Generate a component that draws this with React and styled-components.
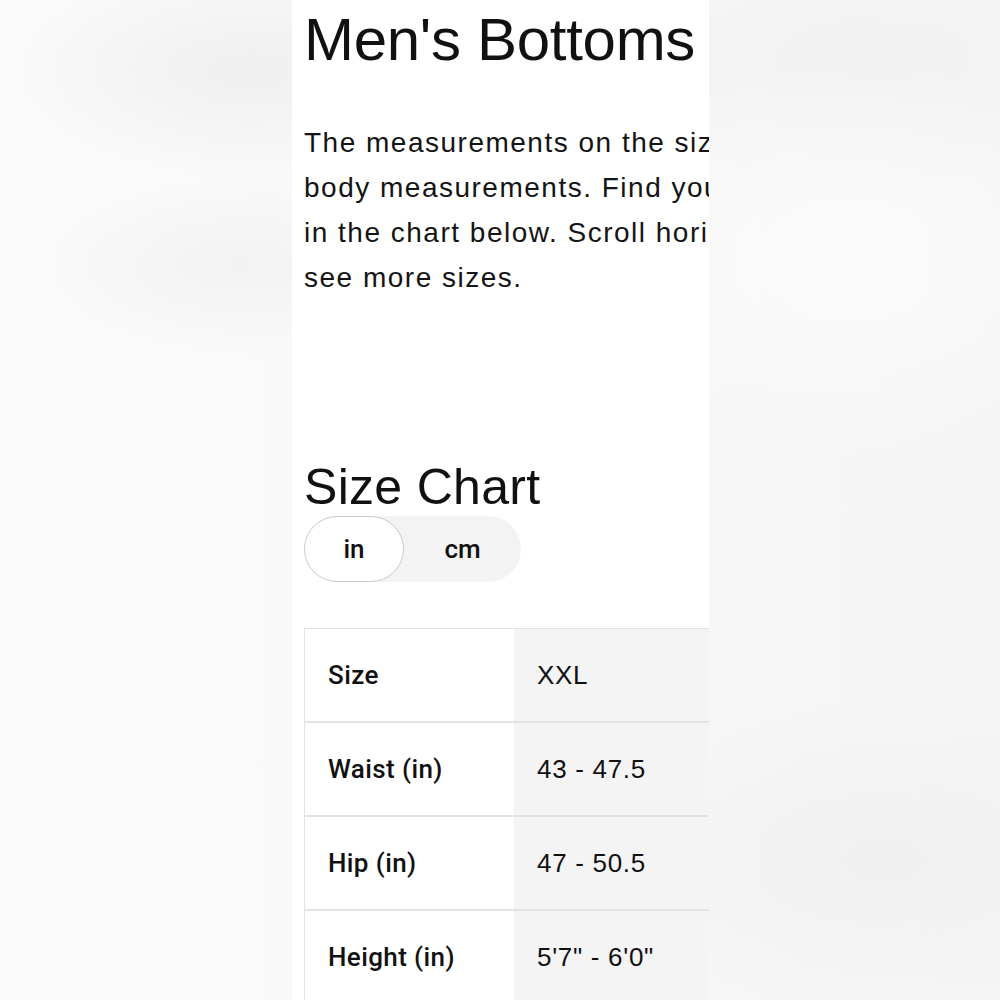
import { createGlobalStyle, styled } from "styled-components";

const GlobalStyle = createGlobalStyle`
    html, body {
        margin: 0;
        padding: 0;
    }

    body {
        width: 1000px;
        height: 1000px;
        overflow: hidden;
        background-color: #f7f7f7;
        background-image:
            radial-gradient(ellipse 260px 110px at 250px 70px, #efefef, rgba(239, 239, 239, 0)),
            radial-gradient(ellipse 220px 90px at 240px 265px, #f2f2f2, rgba(242, 242, 242, 0)),
            radial-gradient(ellipse 300px 200px at 850px 260px, #fbfbfb, rgba(251, 251, 251, 0)),
            radial-gradient(ellipse 300px 140px at 860px 60px, #f1f1f1, rgba(241, 241, 241, 0)),
            radial-gradient(ellipse 320px 160px at 880px 860px, #f0f0f0, rgba(240, 240, 240, 0)),
            linear-gradient(90deg, #fbfbfb, #f5f5f5);
        font-family: "Liberation Sans", Arial, sans-serif;
        color: #111111;
    }
`;

const Page = styled.div`
    width: 1000px;
    height: 1000px;
    display: flex;
    justify-content: flex-start;
    padding-left: 292px;
    box-sizing: border-box;
`;

const Sheet = styled.main`
    width: 417px;
    height: 1000px;
    background-color: #ffffff;
    overflow: hidden;
    padding: 10px 0 0 12px;
    box-sizing: border-box;
`;

const Title = styled.h1`
    margin: 0;
    font-size: 60px;
    line-height: 60px;
    font-weight: 400;
    letter-spacing: -0.3px;
    white-space: nowrap;
`;

const Intro = styled.p`
    margin: 50px 0 0;
    font-size: 28px;
    line-height: 45px;
    letter-spacing: 1.5px;
    white-space: nowrap;
    color: #141414;
`;

const SectionTitle = styled.h2`
    margin: 162px 0 0;
    font-size: 50px;
    line-height: 50px;
    font-weight: 400;
    letter-spacing: 0.3px;
    white-space: nowrap;
`;

const UnitToggle = styled.div`
    margin-top: 4px;
    width: 217px;
    height: 66px;
    border-radius: 33px;
    background-color: #f3f3f3;
    display: flex;
`;

const UnitBtn = styled.button`
    width: ${(props) => props.$active ? "100px" : "117px"};
    height: 66px;
    border-radius: 33px;
    border: ${(props) => props.$active ? "1.5px solid #cbcbcb" : "none"};
    background-color: ${(props) => props.$active ? "#ffffff" : "transparent"};
    font-family: "Roboto", "Liberation Sans", sans-serif;
    font-size: 26px;
    font-weight: 500;
    color: #111111;
    padding: 0;
    display: flex;
    align-items: center;
    justify-content: center;
`;

const Table = styled.div`
    margin-top: 46px;
    display: grid;
    grid-template-columns: 209px 209px 209px;
    border-top: 1.5px solid #e3e3e3;
    border-left: 1.5px solid #e3e3e3;
`;

const Cell = styled.div`
    height: 92px;
    border-bottom: 2px solid #e3e3e3;
    display: flex;
    align-items: center;
    padding-left: 23px;
    background-color: ${(props) => props.$shaded ? "#f4f4f4" : "#ffffff"};
    font-family: ${(props) => props.$label ? "\"Roboto\", \"Liberation Sans\", sans-serif" : "\"Liberation Sans\", Arial, sans-serif"};
    font-size: 26px;
    font-weight: ${(props) => props.$label ? 500 : 400};
    letter-spacing: ${(props) => props.$label ? "0.4px" : "0.7px"};
    white-space: nowrap;
`;

const rows = [
    { label: "Size", values: ["XXL", "XXXL"] },
    { label: "Waist (in)", values: ["43 - 47.5", "47.5 - 52"] },
    { label: "Hip (in)", values: ["47 - 50.5", "50.5 - 54"] },
    { label: "Height (in)", values: ["5'7\" - 6'0\"", "5'8\" - 6'1\""] },
    { label: "Inseam (in)", values: ["32", "32"] },
];

export default function App() {
    return <Page>
        <GlobalStyle />
        <Sheet>
            <Title>Men's Bottoms</Title>
            <Intro>
                The measurements on the size chart are<br />
                body measurements. Find your size<br />
                in the chart below. Scroll horizontally to<br />
                see more sizes.
            </Intro>
            <SectionTitle>Size Chart</SectionTitle>
            <UnitToggle>
                <UnitBtn $active>in</UnitBtn>
                <UnitBtn>cm</UnitBtn>
            </UnitToggle>
            <Table>
                {rows.map((row) => [
                    <Cell key={row.label} $label>{row.label}</Cell>,
                    ...row.values.map((value, index) => {
                        return <Cell key={row.label + index} $shaded={index === 0}>{value}</Cell>
                    })
                ])}
            </Table>
        </Sheet>
    </Page>;
}
